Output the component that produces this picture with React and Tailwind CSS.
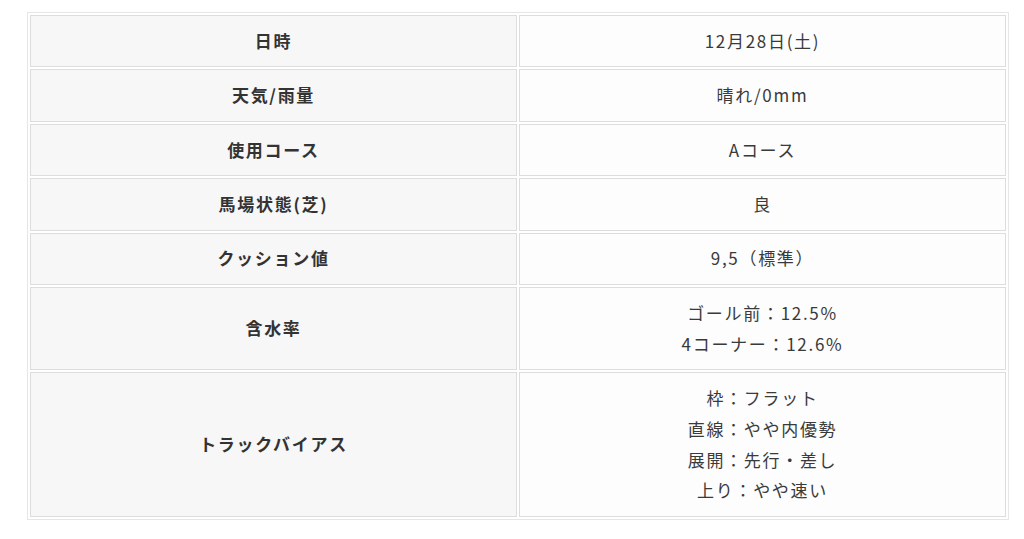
const rows = [
  { label: "日時", value: ["12月28日(土)"] },
  { label: "天気/雨量", value: ["晴れ/0mm"] },
  { label: "使用コース", value: ["Aコース"] },
  { label: "馬場状態(芝)", value: ["良"] },
  { label: "クッション値", value: ["9,5（標準）"] },
  { label: "含水率", value: ["ゴール前：12.5%", "4コーナー：12.6%"] },
  { label: "トラックバイアス", value: ["枠：フラット", "直線：やや内優勢", "展開：先行・差し", "上り：やや速い"] },
];

export default function App() {
  return (
    <div className="min-h-[539px] bg-white pl-[27px] pt-[12px] font-['Noto_Sans_CJK_JP','Noto_Sans',sans-serif] text-[#333]">
      <table className="w-[982px] table-fixed border-separate border-spacing-[2px] border border-[#e6e6e6] text-[17px] leading-[30.8px] tracking-[0.1em]">
        <tbody>
          {rows.map((r) => (
            <tr key={r.label}>
              <th className="border border-[#dddddd] bg-[#f7f7f7] px-2 py-[9.8px] text-center font-bold">
                {r.label}
              </th>
              <td className="border border-[#dddddd] bg-[#fdfdfd] px-2 py-[9.8px] text-center text-[#3a3a3a]">
                {r.value.map((v) => (
                  <div key={v}>{v}</div>
                ))}
              </td>
            </tr>
          ))}
        </tbody>
      </table>
    </div>
  );
}
